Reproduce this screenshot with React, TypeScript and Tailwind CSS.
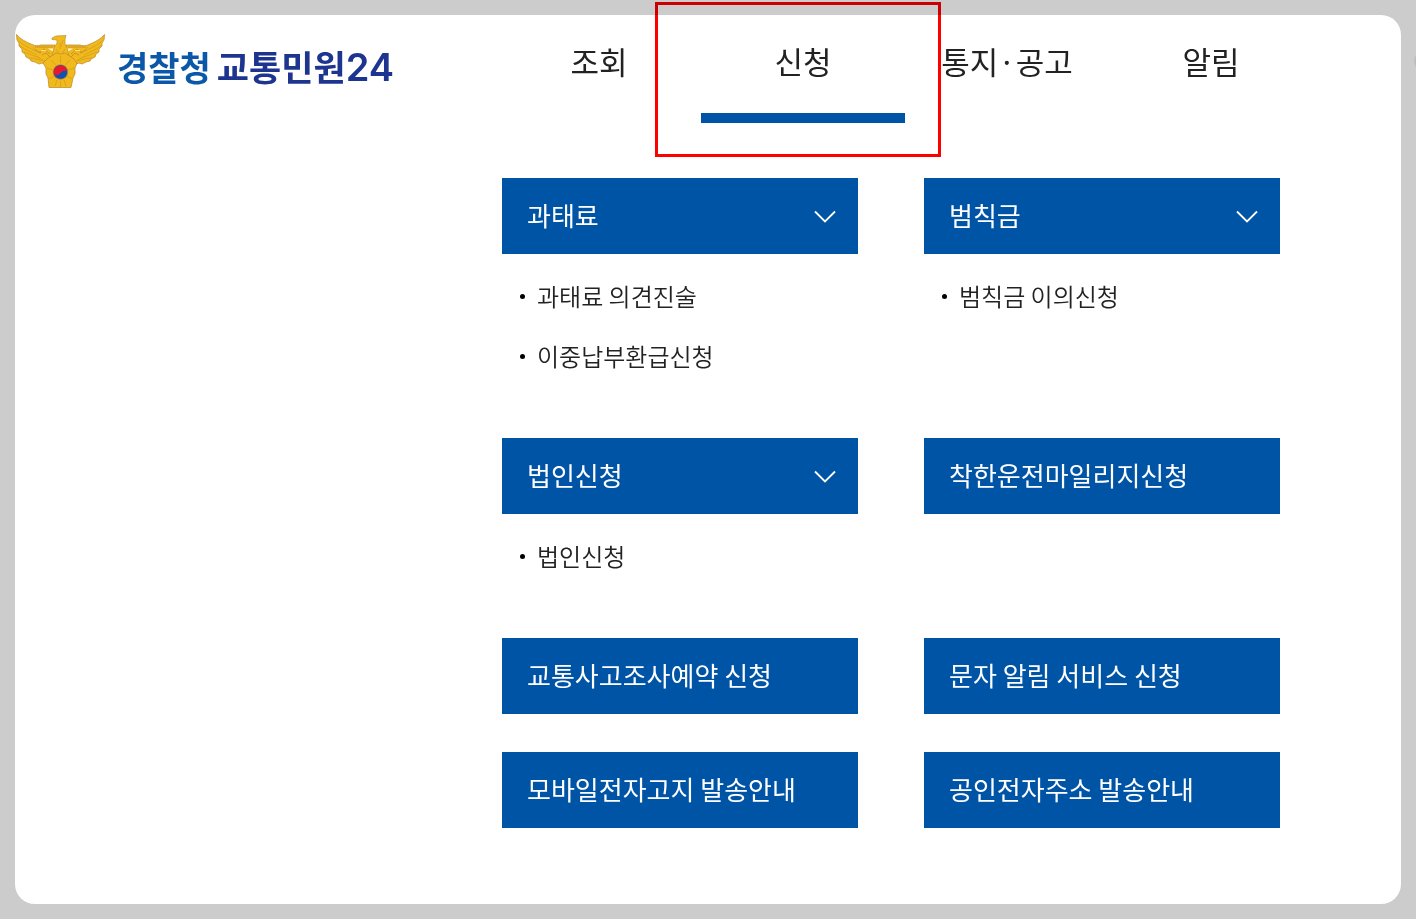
import React from 'react';
import clsx from 'clsx';

interface MenuGroup {
  title: string;
  items?: string[];
}

const navItems = ['조회', '신청', '통지·공고', '알림'];
const activeNav = '신청';

const menuGroups: MenuGroup[] = [
  { title: '과태료', items: ['과태료 의견진술', '이중납부환급신청'] },
  { title: '범칙금', items: ['범칙금 이의신청'] },
  { title: '법인신청', items: ['법인신청'] },
  { title: '착한운전마일리지신청' },
  { title: '교통사고조사예약 신청' },
  { title: '문자 알림 서비스 신청' },
  { title: '모바일전자고지 발송안내' },
  { title: '공인전자주소 발송안내' },
];

function Wing() {
  return (
    <>
      <path
        d="M1.500 0.500C5 5 11 8 17 10.500C20 12 23 12 26 11L40 11V30L33 31L27 29L24 30L20 28L16 27L15 25L11 23L10 20L7 18L7 15L4 12L4 9L2 6Z"
        fill="#f0b91c"
        stroke="#c48e2c"
        strokeWidth="0.8"
      />
      <path
        d="M4 7C9 12 15 14 21 17M5 12C11 16 16 18 22 21M9 18C14 20 19 22 25 24M14 24C19 24 24 26 30 27M18 13L24 19M21 22L28 26"
        fill="none"
        stroke="#d8a01f"
        strokeWidth="0.9"
      />
      <path
        d="M20 13L27 13L38 13M24 19L29 15L35 20M27 21L31 19L36 24M20 16L26 19"
        fill="none"
        stroke="#c48e2c"
        strokeWidth="0.9"
      />
      <path d="M33 14.500L39 14.500L38 17.500Z" fill="#fdf3d3" />
      <path d="M26 16.500L31 16.500" stroke="#fbe38a" strokeWidth="1" fill="none" />
    </>
  );
}

function PoliceEmblem() {
  return (
    <svg viewBox="0 0 90 55" className="h-[55px] w-[90px] shrink-0" aria-hidden="true">
      <Wing />
      <g transform="translate(91 0) scale(-1 1)">
        <Wing />
      </g>
      <path
        d="M37 4L41 2L51 1.500L50 5L50 10L52 14L54 22H37L39 14L42 9V6L37 5.500Z"
        fill="#f0b91c"
        stroke="#c48e2c"
        strokeWidth="0.7"
      />
      <path
        d="M38 21L41 19L45.500 20L50 19L53 21L58 24L62 29L60 34L60 40L58 44L56 53.500H34L33 44L31 40L31 34L28 29L33 24Z"
        fill="#f0b91c"
        stroke="#c48e2c"
        strokeWidth="0.8"
      />
      <path
        d="M45 9V15M48 6L46 13M41 15L44 20M50 15L47 20M45.500 22V29M36 26L41 31M55 26L50 31M32 34L38 36M59 34L53 36M34 45L39 42M57 45L52 42M40 52L42 46M51 52L49 46M45.500 47V53"
        fill="none"
        stroke="#d8a01f"
        strokeWidth="0.9"
      />
      <circle cx="45.5" cy="38" r="7.3" fill="#1450ae" stroke="#c98d28" strokeWidth="0.7" />
      <path
        d="M38.700 40A7 7 0 0 1 52.400 37C50 35.800 47.500 36.800 46 38.500C44 41 41 42 38.700 40Z"
        fill="#e8182f"
      />
    </svg>
  );
}

function ChevronIcon() {
  return (
    <svg viewBox="0 0 22 14" className="mt-0.5 h-[14px] w-[22px]" fill="none" aria-hidden="true">
      <path d="M1 1.500L11 11.500L21 1.500" stroke="white" strokeWidth="1.8" />
    </svg>
  );
}

function MenuCard({ group }: { group: MenuGroup }) {
  return (
    <section>
      <button
        type="button"
        className="flex h-[76px] w-full items-center justify-between bg-[#0054a6] pr-[22px] pl-[25px] text-left text-[26px] text-white"
      >
        <span className="pb-1">{group.title}</span>
        {group.items && <ChevronIcon />}
      </button>
      {group.items && (
        <ul className="pt-3 pb-[14px] pl-[18px]">
          {group.items.map((item) => (
            <li key={item} className="flex h-[60px] items-center gap-3">
              <span className="size-[5px] rounded-full bg-black" />
              <a href="#" className="text-2xl font-[350] text-[#222222]">
                {item}
              </a>
            </li>
          ))}
        </ul>
      )}
    </section>
  );
}

export default function App() {
  return (
    <div className="relative flex min-h-screen overflow-hidden bg-[#cccccc] p-[15px] font-['Noto_Sans_CJK_KR',sans-serif]">
      <div className="flex-1 rounded-[20px] bg-white">
        <header className="flex items-start pr-[88px]">
          <a href="#" className="flex w-[380px] shrink-0 items-start pt-[19px] whitespace-nowrap">
            <PoliceEmblem />
            <span className="flex items-baseline pt-1 pl-3 text-[34px] leading-[55px] font-bold">
              <span className="text-[#0b58a8]">경찰청</span>
              <span className="ml-1.5 text-[35px] text-[#1e3590]">교통민원</span>
              <span className="font-[Inter,sans-serif] text-[38px] font-semibold text-[#1e3590]">24</span>
            </span>
          </a>
          <nav className="ml-[102px] grid flex-1 grid-cols-4">
            {navItems.map((item) => (
              <div key={item} className="relative">
                <a
                  href="#"
                  className={clsx(
                    'flex h-[108px] justify-center border-b-[10px] pt-[23px] text-[31px] whitespace-nowrap text-[#222222]',
                    item === activeNav ? 'border-[#0054a6]' : 'border-transparent',
                  )}
                >
                  {item}
                </a>
                {item === activeNav && (
                  <div className="pointer-events-none absolute -top-[13px] -right-9 -bottom-[34px] -left-[46px] border-[3px] border-[#ff0000] mix-blend-multiply" />
                )}
              </div>
            ))}
          </nav>
        </header>
        <main className="mt-[55px] mr-[121px] ml-[487px] grid grid-cols-2 gap-x-[66px] gap-y-[38px]">
          {menuGroups.map((group) => (
            <MenuCard key={group.title} group={group} />
          ))}
        </main>
      </div>
      {/* knob that peeks in from the page edge */}
      <span className="absolute top-[51px] -right-[18px] size-5 rounded-full border-2 border-[#b9bec6]" />
    </div>
  );
}
